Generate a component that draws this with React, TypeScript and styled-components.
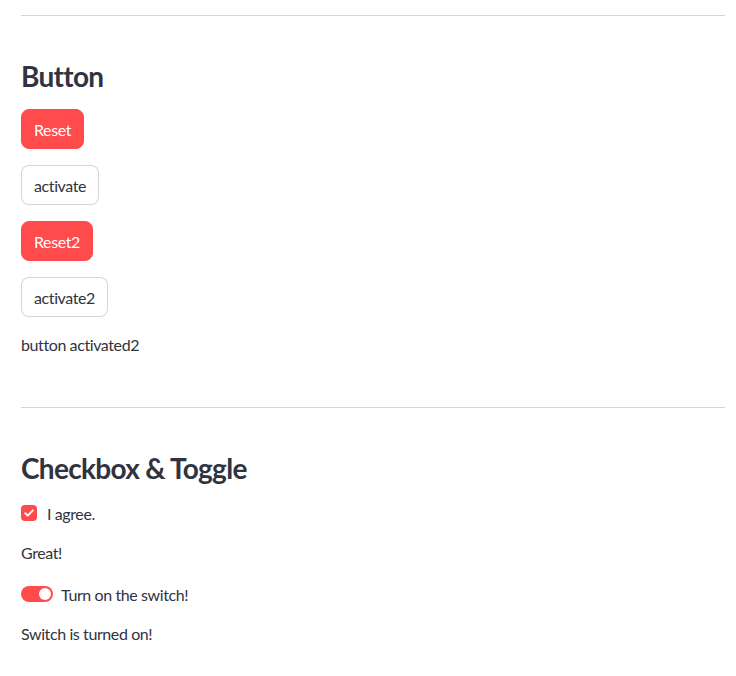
import React from "react";
import styled, { createGlobalStyle } from "styled-components";

const GlobalStyle = createGlobalStyle`
  body {
    margin: 0;
    background: #fff;
    font-family: Lato, "Noto Sans", sans-serif;
    color: rgb(49, 51, 63);
    letter-spacing: -0.4px;
  }
`;

const Page = styled.main`
  display: flex;
  flex-direction: column;
  gap: 16px;
  padding: 15px 11px 40px 21px;
`;

const Divider = styled.hr<{ top?: number }>`
  margin: ${({ top }) => top ?? 0}px 0 0;
  border: none;
  border-top: 1px solid rgba(49, 51, 63, 0.2);
  height: 0;
`;

const Heading = styled.h3`
  margin: 27px 0 0;
  font-size: 28px;
  font-weight: 700;
  line-height: 34px;
  letter-spacing: -0.7px;
`;

const Button = styled.button<{ primary?: boolean }>`
  align-self: flex-start;
  height: 40px;
  padding: 0 12px;
  border-radius: 8px;
  font-family: inherit;
  font-size: 16px;
  letter-spacing: inherit;
  cursor: pointer;
  border: 1px solid ${({ primary }) => (primary ? "#ff4b4b" : "rgba(49, 51, 63, 0.2)")};
  background: ${({ primary }) => (primary ? "#ff4b4b" : "#fff")};
  color: ${({ primary }) => (primary ? "#fff" : "rgb(49, 51, 63)")};
`;

const Text = styled.p`
  margin: 0;
  font-size: 16px;
  line-height: 24px;
`;

const Control = styled.label<{ shift?: number }>`
  display: flex;
  align-items: center;
  gap: 10px;
  height: 24px;
  margin-top: ${({ shift }) => shift ?? 0}px;
  font-size: 16px;
`;

const Box = styled.span`
  width: 16px;
  height: 16px;
  border-radius: 4px;
  background: #ff4b4b;
  display: flex;
  align-items: center;
  justify-content: center;
`;

const Track = styled.span`
  position: relative;
  width: 32px;
  height: 16px;
  border-radius: 8px;
  background: #ff4b4b;
  margin-right: -2px;
`;

const Knob = styled.span`
  position: absolute;
  right: 2px;
  top: 2px;
  width: 12px;
  height: 12px;
  border-radius: 50%;
  background: #fff;
`;

const App: React.FC = () => {
	return (
		<Page>
			<GlobalStyle />
			<Divider />
			<Heading>Button</Heading>
			<Button primary>Reset</Button>
			<Button>activate</Button>
			<Button primary>Reset2</Button>
			<Button>activate2</Button>
			<Text>button activated2</Text>
			<Divider top={34} />
			<Heading>Checkbox &amp; Toggle</Heading>
			<Control>
				<Box>
					<svg width="12" height="12" viewBox="0 0 12 12">
						<path d="M2.2 6.2 L4.8 8.6 L9.8 3.4" fill="none" stroke="#fff" strokeWidth="2" strokeLinecap="round" strokeLinejoin="round" />
					</svg>
				</Box>
				I agree.
			</Control>
			<Text>Great!</Text>
			<Control shift={1}>
				<Track>
					<Knob />
				</Track>
				Turn on the switch!
			</Control>
			<Text>Switch is turned on!</Text>
		</Page>
	);
};

export default App;
